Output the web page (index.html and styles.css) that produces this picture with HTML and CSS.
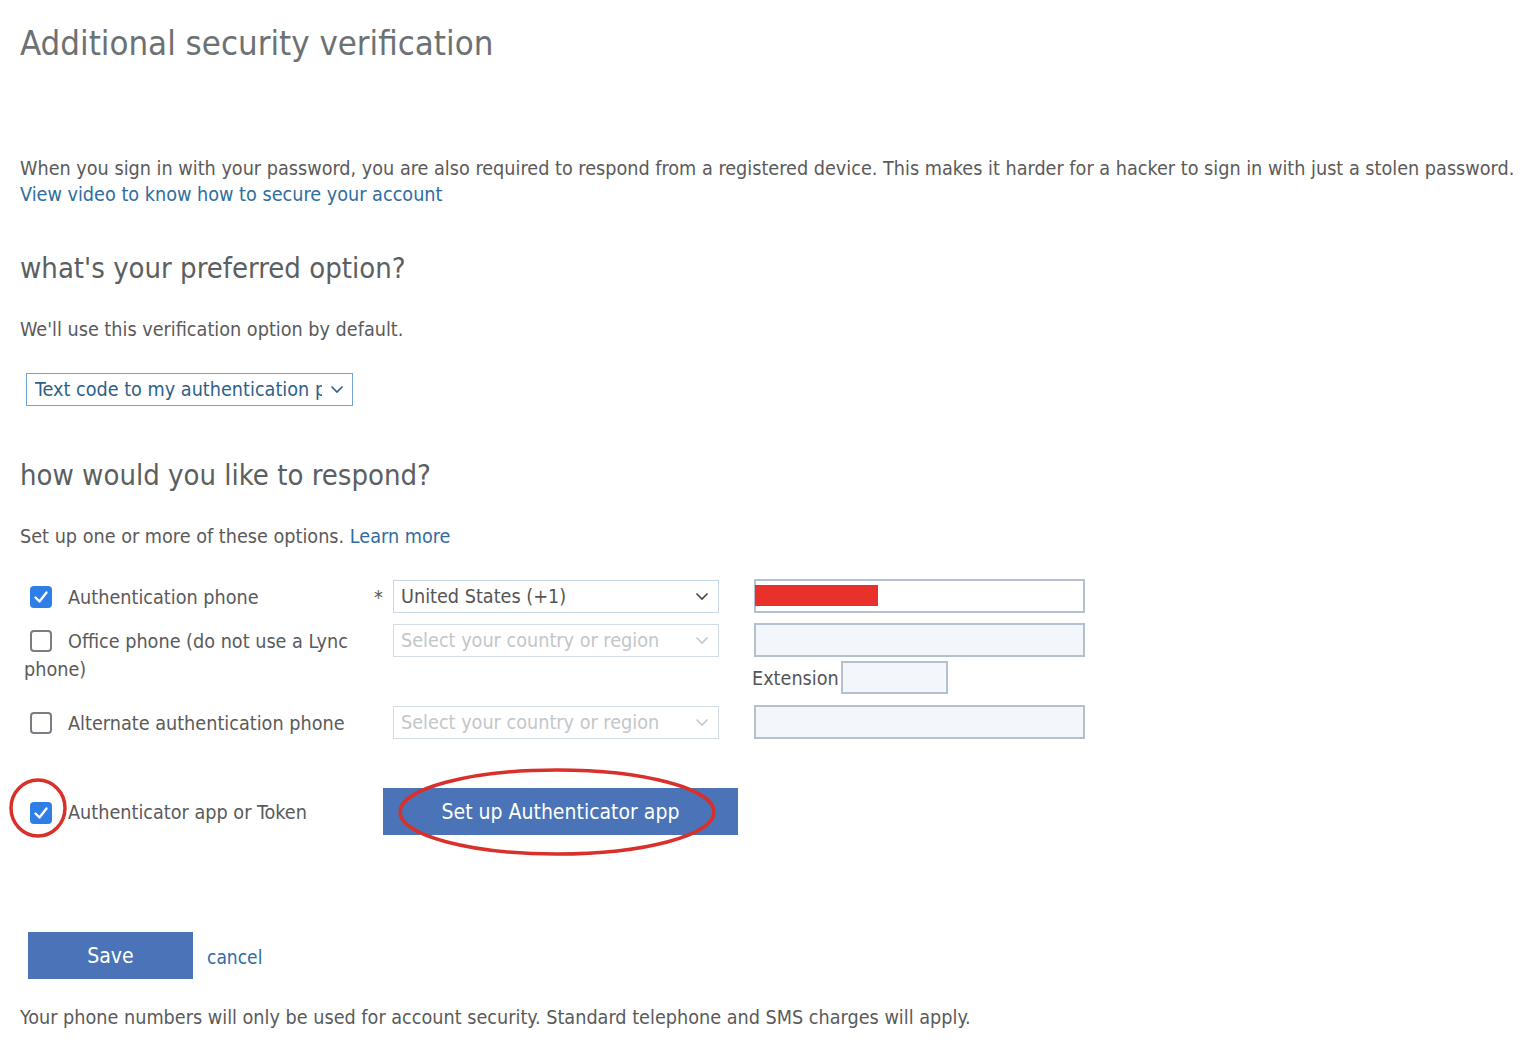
FILE: index.html
```html
<!DOCTYPE html>
<html lang="en">
<head>
<meta charset="utf-8">
<title>Additional security verification</title>
<link rel="stylesheet" href="styles.css">
</head>
<body>
<main class="page">
  <h1 class="title">Additional security verification</h1>

  <p class="intro">When you sign in with your password, you are also required to respond from a registered device. This makes it harder for a hacker to sign in with just a stolen password.<br>
    <a class="link" href="#">View video to know how to secure your account</a></p>

  <h2 class="section-title first">what's your preferred option?</h2>
  <p class="note">We'll use this verification option by default.</p>

  <div class="pref-select">
    <span class="pref-text">Text code to my authentication phone</span>
    <svg class="chev" width="14" height="9" viewBox="0 0 14 9"><path d="M1.5 1.5 L7 7 L12.5 1.5" fill="none" stroke="#2e5f8a" stroke-width="1.6"/></svg>
  </div>

  <h2 class="section-title second">how would you like to respond?</h2>
  <p class="note">Set up one or more of these options. <a class="link" href="#">Learn more</a></p>

  <div class="methods">
    <div class="method">
      <div class="label"><span class="box checked"><svg width="22" height="22" viewBox="0 0 22 22"><path d="M5.5 11.5 L9.5 15.5 L16.5 6.5" fill="none" stroke="#fff" stroke-width="2.4" stroke-linecap="round" stroke-linejoin="round"/></svg></span>Authentication phone</div>
      <div class="req">*</div>
      <div class="country active"><span>United States (+1)</span><svg class="chev" width="14" height="9" viewBox="0 0 14 9"><path d="M1.5 1.5 L7 7 L12.5 1.5" fill="none" stroke="#444" stroke-width="1.6"/></svg></div>
      <div class="phone-col">
        <div class="phone filled"><span class="redact"></span></div>
      </div>
    </div>

    <div class="method office">
      <div class="label wrap"><span class="box"></span>Office phone (do not use a Lync phone)</div>
      <div class="req"></div>
      <div class="country"><span>Select your country or region</span><svg class="chev" width="14" height="9" viewBox="0 0 14 9"><path d="M1.5 1.5 L7 7 L12.5 1.5" fill="none" stroke="#c4c8cc" stroke-width="1.6"/></svg></div>
      <div class="phone-col">
        <div class="phone"></div>
        <div class="ext"><span class="ext-label">Extension</span><span class="ext-input"></span></div>
      </div>
    </div>

    <div class="method">
      <div class="label"><span class="box"></span>Alternate authentication phone</div>
      <div class="req"></div>
      <div class="country"><span>Select your country or region</span><svg class="chev" width="14" height="9" viewBox="0 0 14 9"><path d="M1.5 1.5 L7 7 L12.5 1.5" fill="none" stroke="#c4c8cc" stroke-width="1.6"/></svg></div>
      <div class="phone-col">
        <div class="phone"></div>
      </div>
    </div>

    <div class="app-row">
      <div class="app-label">
        <span class="box-wrap">
          <span class="box checked"><svg width="22" height="22" viewBox="0 0 22 22"><path d="M5.5 11.5 L9.5 15.5 L16.5 6.5" fill="none" stroke="#fff" stroke-width="2.4" stroke-linecap="round" stroke-linejoin="round"/></svg></span>
          <svg class="ring ring-box" width="60" height="62" viewBox="0 0 60 62"><ellipse cx="30" cy="31" rx="27" ry="28" fill="none" stroke="#d8302a" stroke-width="3.5"/></svg>
        </span>
        <span>Authenticator app or Token</span>
      </div>
      <div class="setup-wrap">
        <button class="setup" type="button">Set up Authenticator app</button>
        <svg class="ring ring-btn" width="322" height="92" viewBox="0 0 322 92"><ellipse cx="161" cy="46" rx="157" ry="42" fill="none" stroke="#d8302a" stroke-width="3.5"/></svg>
      </div>
    </div>
  </div>

  <div class="actions">
    <button class="save" type="button">Save</button>
    <a class="link cancel" href="#">cancel</a>
  </div>

  <p class="footer">Your phone numbers will only be used for account security. Standard telephone and SMS charges will apply.</p>
</main>
</body>
</html>
```

FILE: styles.css
```css
html, body {
  margin: 0;
  padding: 0;
  background: #ffffff;
}

body {
  font-family: "DejaVu Sans Condensed", "DejaVu Sans", sans-serif;
  color: #5a5a5a;
  font-size: 19.65px;
}

.page {
  padding: 22px 0 0 20px;
}

.title {
  margin: 0;
  font-size: 34.5px;
  line-height: 43px;
  font-weight: normal;
  color: #6c7173;
}

.intro {
  margin: 91px 0 0 0;
  line-height: 26px;
}

.link {
  color: #2f6d9f;
  text-decoration: none;
}

.section-title {
  margin: 0;
  font-size: 29px;
  line-height: 36px;
  font-weight: normal;
  color: #5c5f61;
}

.section-title.first { margin-top: 42px; }
.section-title.second { margin-top: 51px; }

.note {
  margin: 31px 0 0 0;
  line-height: 26px;
}

.pref-select {
  margin: 30px 0 0 6px;
  width: 325px;
  height: 31px;
  border: 1px solid #6fa4d4;
  display: flex;
  align-items: center;
  color: #2e5f8a;
}

.pref-text {
  display: block;
  width: 287px;
  margin-left: 8px;
  overflow: hidden;
  white-space: nowrap;
}

.pref-select .chev {
  margin-left: 8px;
}

.methods {
  margin-top: 29px;
}

.method {
  display: grid;
  grid-template-columns: 352px 21px 326px 35px 331px;
  margin-bottom: 10px;
}

.method.office {
  margin-bottom: 11px;
}

.phone-col {
  grid-column: 5;
}

.label {
  padding-left: 4px;
  line-height: 28px;
  padding-top: 5px;
}

.box {
  display: inline-block;
  width: 22px;
  height: 22px;
  box-sizing: border-box;
  border: 2px solid #7c7d84;
  border-radius: 4px;
  vertical-align: -4px;
  margin: 0 16px 0 6px;
  background: #fff;
}

.box.checked {
  border: none;
  background: #2f7ee8;
}

.box svg { display: block; }

.req {
  padding-top: 7px;
  color: #555;
  padding-left: 2px;
}

.country {
  height: 33px;
  box-sizing: border-box;
  border: 1px solid #d3dde8;
  display: flex;
  align-items: center;
  justify-content: space-between;
  padding: 0 9px 0 7px;
  color: #c3c6ca;
  margin-top: 1px;
}

.country.active {
  color: #555;
  border-color: #c6d7ea;
}

.phone {
  height: 34px;
  box-sizing: border-box;
  border: 2px solid #b2c0cf;
  background: #f3f7fb;
  position: relative;
}

.phone.filled {
  background: #fff;
}

.redact {
  position: absolute;
  left: -1px;
  top: 4px;
  width: 123px;
  height: 21px;
  background: #e8312a;
}

.ext {
  display: flex;
  align-items: center;
  margin: 4px 0 0 -2px;
}

.ext-label {
  color: #555;
  margin-right: 2px;
  padding-top: 2px;
}

.ext-input {
  display: block;
  width: 107px;
  height: 33px;
  box-sizing: border-box;
  border: 2px solid #b2c0cf;
  background: #f3f7fb;
}

.app-row {
  display: flex;
  align-items: center;
  margin-top: 49px;
}

.app-label {
  width: 359px;
  padding-left: 4px;
  display: flex;
  align-items: center;
  padding-top: 2px;
}

.box-wrap {
  position: relative;
  display: block;
  margin: 0 16px 0 6px;
  width: 22px;
  height: 22px;
}

.box-wrap .box {
  margin: 0;
  vertical-align: top;
  display: block;
}

.ring {
  position: absolute;
  pointer-events: none;
}

.ring-box {
  left: -22px;
  top: -25px;
}

.setup-wrap {
  position: relative;
}

.setup {
  display: block;
  width: 355px;
  height: 47px;
  border: none;
  background: #4a74b7;
  color: #fff;
  font-family: inherit;
  font-size: 21px;
  padding: 0;
  cursor: pointer;
}

.ring-btn {
  left: 13px;
  top: -22px;
}

.actions {
  display: flex;
  align-items: center;
  margin: 97px 0 0 8px;
}

.save {
  width: 165px;
  height: 47px;
  border: none;
  background: #4a74b7;
  color: #fff;
  font-family: inherit;
  font-size: 21px;
  padding: 0;
}

.cancel {
  margin-left: 14px;
  font-size: 19px;
  padding-top: 2px;
}

.footer {
  margin: 26px 0 0 0;
  line-height: 26px;
}
```
